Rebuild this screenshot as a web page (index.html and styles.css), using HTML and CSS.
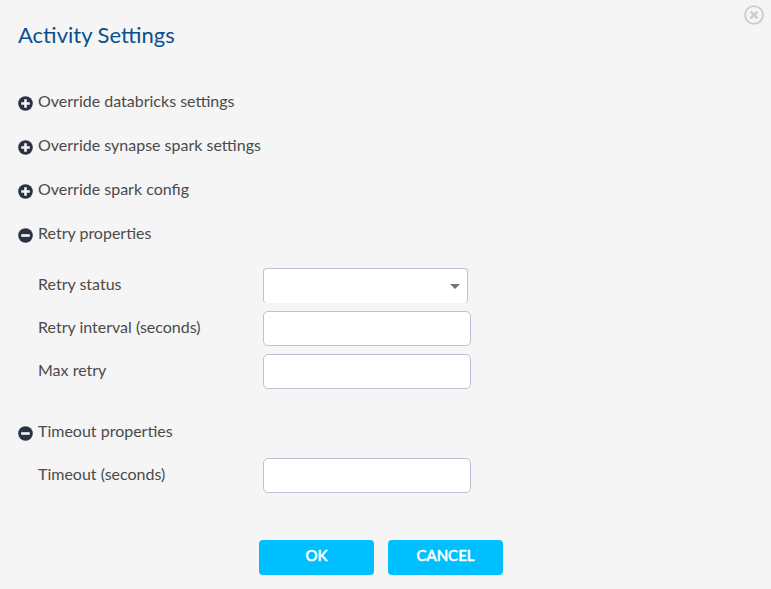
FILE: index.html
```html
<!DOCTYPE html>
<html lang="en">
<head>
<meta charset="utf-8">
<title>Activity Settings</title>
<link rel="stylesheet" href="styles.css">
</head>
<body>
<main class="dialog">
  <button class="close" aria-label="Close"><svg width="20" height="20" viewBox="0 0 20 20"><circle cx="10" cy="10" r="8.9"/><path d="M6.6 6.6l6.8 6.8M13.4 6.6l-6.8 6.8"/></svg></button>
  <h1 class="title">Activity Settings</h1>
  <div class="section"><svg class="toggle" viewBox="0 0 15 15"><circle cx="7.5" cy="7.5" r="7.3"/><path d="M3.2 7.5h8.6M7.5 3.2v8.6"/></svg>Override databricks settings</div>
  <div class="section"><svg class="toggle" viewBox="0 0 15 15"><circle cx="7.5" cy="7.5" r="7.3"/><path d="M3.2 7.5h8.6M7.5 3.2v8.6"/></svg>Override synapse spark settings</div>
  <div class="section"><svg class="toggle" viewBox="0 0 15 15"><circle cx="7.5" cy="7.5" r="7.3"/><path d="M3.2 7.5h8.6M7.5 3.2v8.6"/></svg>Override spark config</div>
  <div class="section"><svg class="toggle" viewBox="0 0 15 15"><circle cx="7.5" cy="7.5" r="7.3"/><path d="M3.2 7.5h8.6"/></svg>Retry properties</div>
  <div class="fields retry">
    <div class="row"><label>Retry status</label><div class="select"><svg width="10" height="5" viewBox="0 0 10 5"><path d="M0 0h10L5 5z"/></svg></div></div>
    <div class="row"><label>Retry interval (seconds)</label><input class="box"></div>
    <div class="row"><label>Max retry</label><input class="box"></div>
  </div>
  <div class="section compact"><svg class="toggle" viewBox="0 0 15 15"><circle cx="7.5" cy="7.5" r="7.3"/><path d="M3.2 7.5h8.6"/></svg>Timeout properties</div>
  <div class="fields">
    <div class="row"><label>Timeout (seconds)</label><input class="box"></div>
  </div>
  <div class="actions"><button class="btn">OK</button><button class="btn">CANCEL</button></div>
</main>
</body>
</html>
```
FILE: styles.css
```css
* { box-sizing: border-box; }
body { margin: 0; background: #f5f5f5; color: #4a4a4a; font: 16px/24px Lato, sans-serif; }
.dialog { position: relative; height: 589px; padding: 20px 18px 0; overflow: hidden; }
.close { position: absolute; top: 5px; right: 7px; width: 20px; height: 20px; padding: 0; border: 0; background: none; }
.close svg { display: block; fill: none; stroke: #ccc; stroke-width: 1.8; }
.close path { stroke-width: 2.4; }
.title { margin: 0 0 39px; font-size: 22px; line-height: 30px; font-weight: 400; color: #0b4f8e; }
.section { display: flex; align-items: center; gap: 5px; height: 24px; margin-bottom: 20px; }
.compact { margin-bottom: 15px; }
.toggle { width: 15px; height: 15px; margin-top: 4px; fill: #2b3245; }
.toggle path { stroke: #f5f5f5; stroke-width: 2.6; }
.fields { display: grid; gap: 8px; padding-left: 20px; }
.retry { margin: 23px 0 30px; }
.row { display: grid; grid-template-columns: 225px 208px; height: 35px; }
.row label { padding-top: 4px; }
.box { width: 208px; height: 35px; border: 1px solid #b9c3d2; border-radius: 5px; background: #fff; }
.select { display: flex; align-items: center; justify-content: flex-end; width: 205px; height: 35px; padding-right: 7px; border: 1px solid #b9c3d2; border-bottom: 0; border-radius: 4px; background: #fff; }
.select svg { fill: #757575; }
.actions { display: flex; gap: 14px; margin: 47px 0 0 241px; }
.btn { width: 115px; height: 35px; padding: 0 0 5px; border: 0; border-radius: 4px; background: #00bfff; color: #fff; font: 400 15px/24px Lato, sans-serif; -webkit-text-stroke: 0.6px #fff; }
```
